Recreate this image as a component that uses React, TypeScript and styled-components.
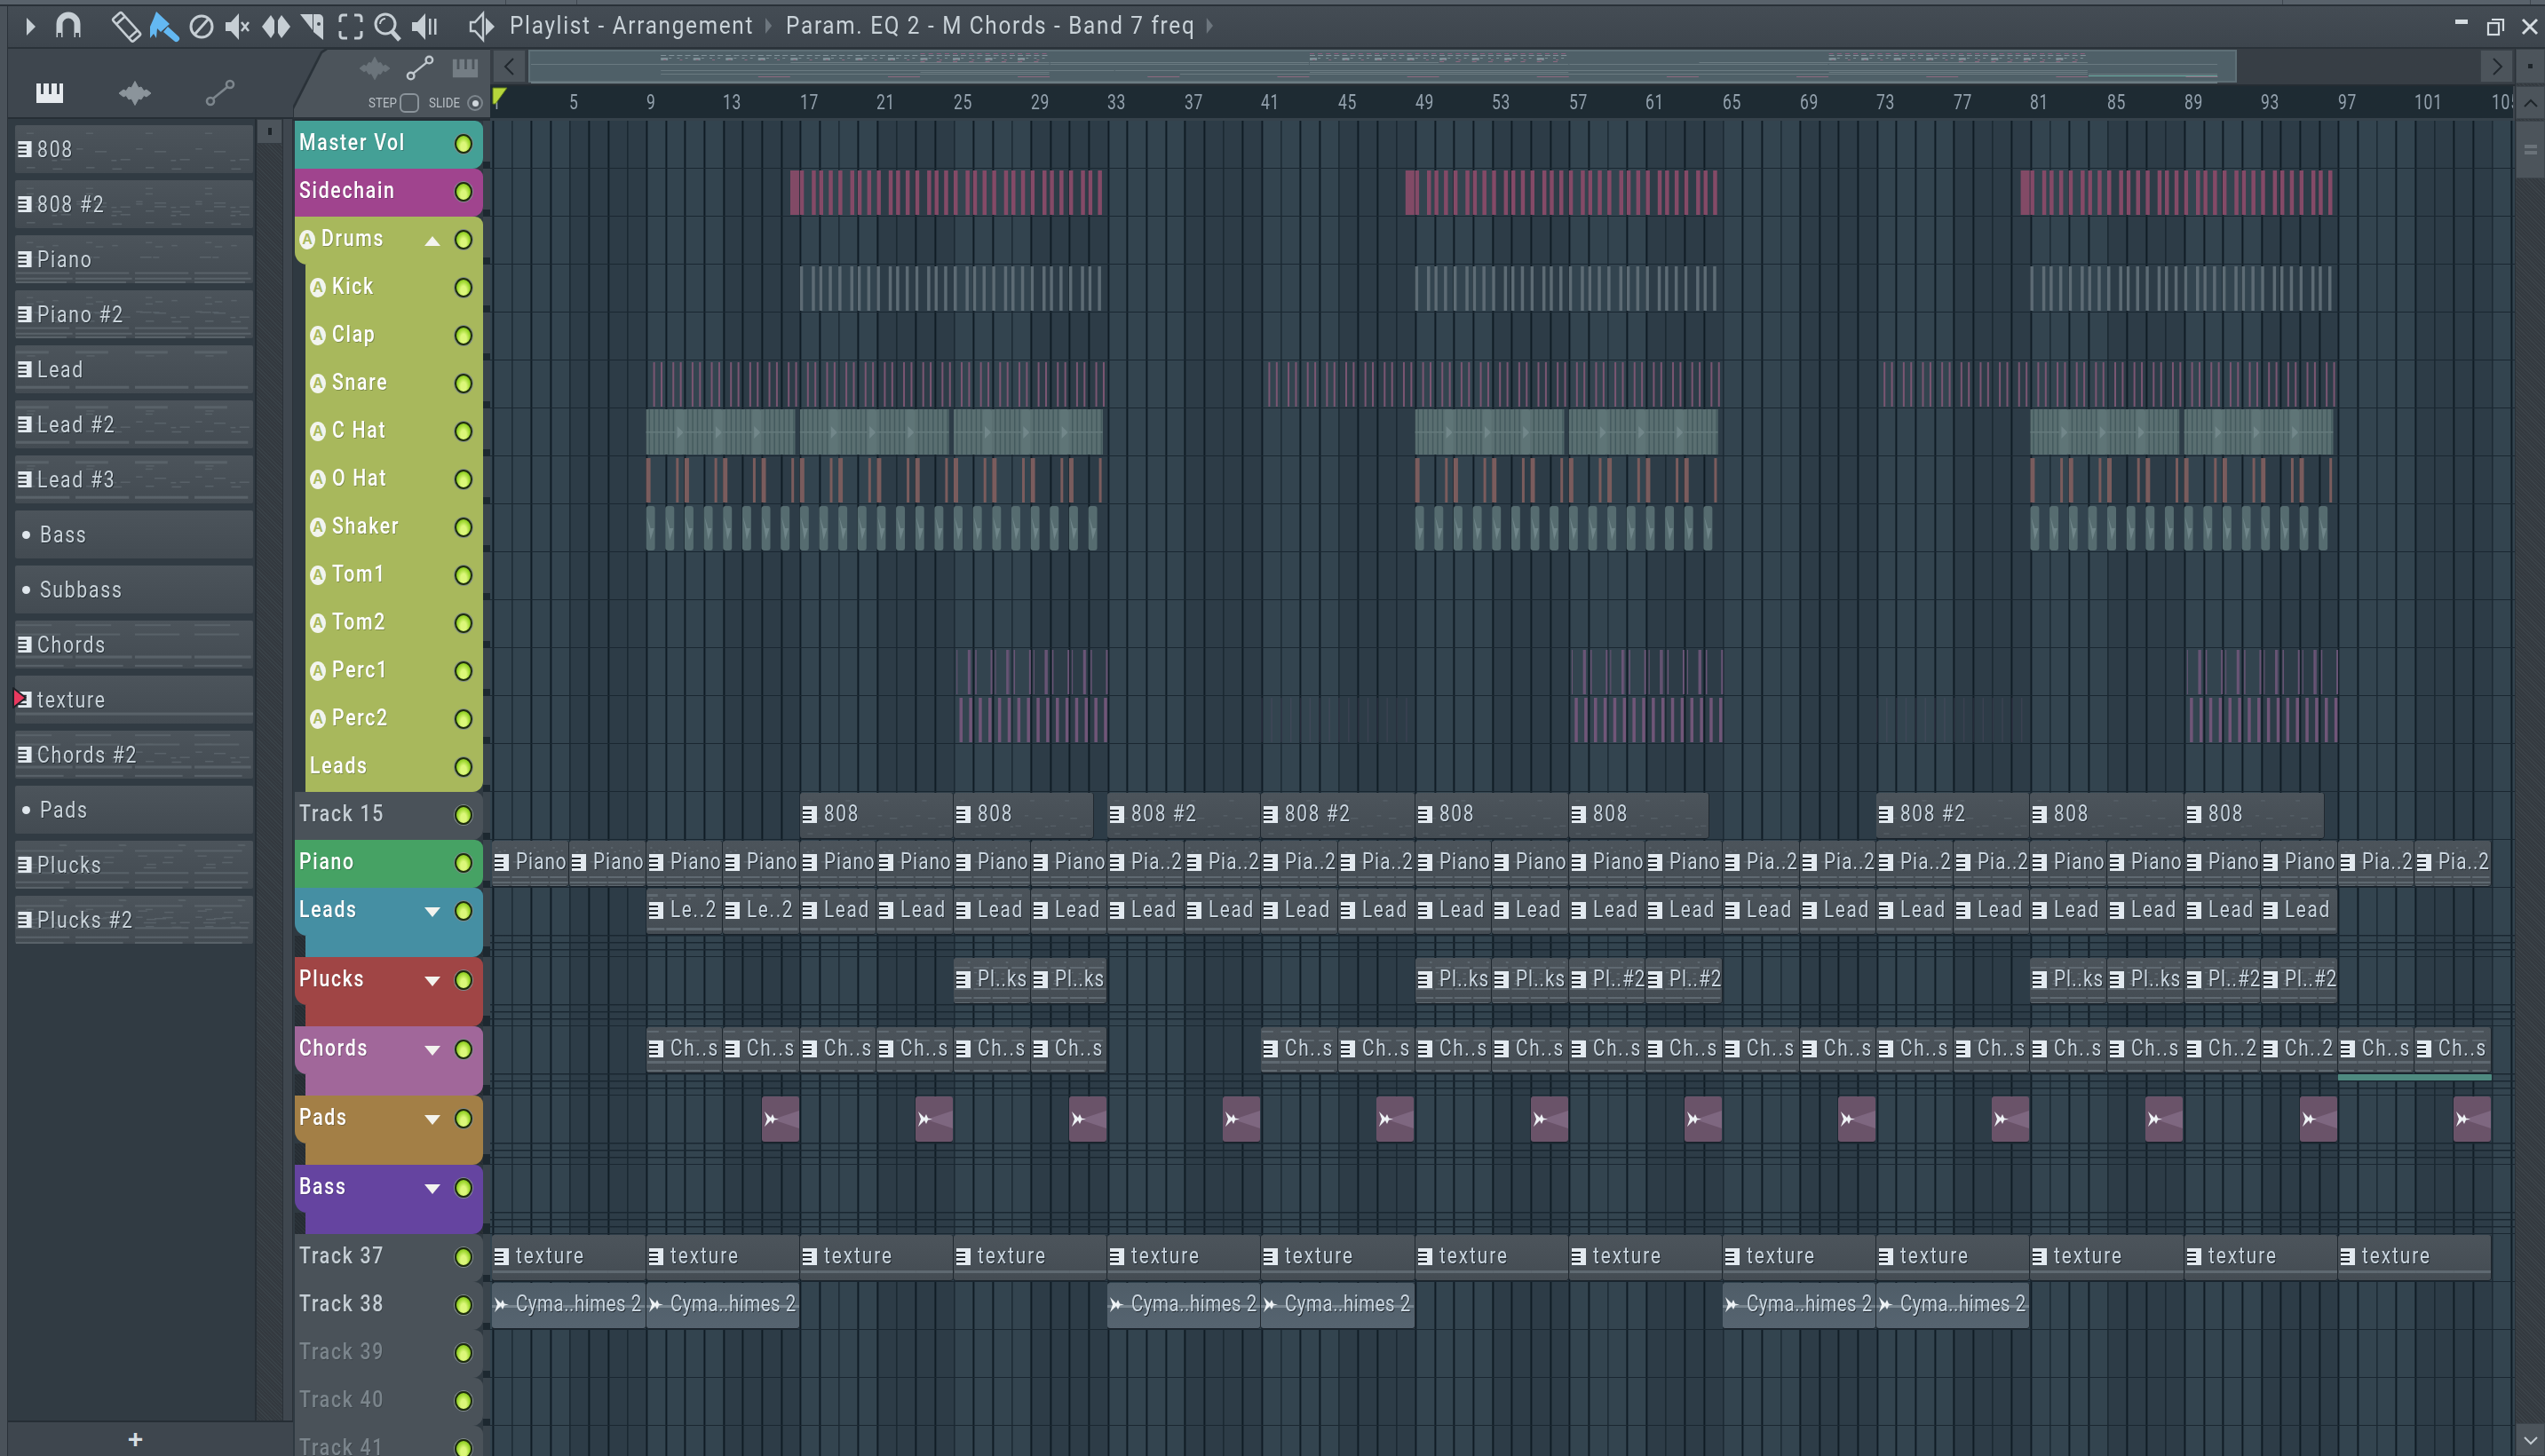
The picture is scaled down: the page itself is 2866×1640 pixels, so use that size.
import React from "react";
import styled, { createGlobalStyle } from "styled-components";

const FONT = `Roboto, "Liberation Sans", sans-serif`;
const BAR = 21.65;
const X0 = 2.4;
const bx = (b: number) => X0 + b * BAR;

const Global = createGlobalStyle`
  html, body { margin: 0; padding: 0; background: #4a525a; overflow: hidden; }
  * { box-sizing: border-box; }
`;

/* ---------- shell ---------- */
const Root = styled.div`
  width: 2866px; height: 1640px; display: flex; flex-direction: column; overflow: hidden;
  font-family: ${FONT}; background: #4a525a; color: #c9d3da;
`;
const TopStrip = styled.div`
  height: 7px; flex: none; background: #59626b; border-bottom: 2px solid #2a3138;
  display: flex;
`;
const StripCell = styled.div<{ $w: number }>`
  width: ${p => p.$w}px; height: 5px; border-right: 1px solid #3f474f;
`;
const Window = styled.div`
  flex: 1; min-height: 0; margin-left: 8px; border-left: 1px solid #2a3138;
  display: flex; flex-direction: column; background: #3e464e;
`;
const TitleBar = styled.div`
  height: 48px; flex: none; display: flex; align-items: center; padding-left: 9px;
  background: linear-gradient(#444c54, #3d454d);
  border-bottom: 2px solid #2a3239;
`;
const ToolIcon = styled.svg<{ $ml?: number }>`
  width: 36px; height: 36px; flex: none; margin-left: ${p => p.$ml ?? 6}px;
`;
const Title = styled.div`
  margin-left: 12px; font-size: 27px; letter-spacing: 1.9px; color: #c9d2d8; white-space: nowrap;
  display: flex; align-items: center; position: relative; top: -1px;
  transform: scaleX(0.9); transform-origin: 0 50%; width: 640px;
`;
const Crumb = styled.span`
  width: 0; height: 0; margin: 0 18px 0 14px; border-left: 8px solid #6d767e; border-top: 9px solid transparent; border-bottom: 9px solid transparent;
`;
const WinControls = styled.div`
  margin-left: auto; display: flex; gap: 16px; padding-right: 6px; align-items: center;
`;
const WinIcon = styled.svg`
  width: 22px; height: 22px;
`;
const Main = styled.div`
  flex: 1; min-height: 0; display: flex;
`;

/* ---------- left browser ---------- */
const LeftPanel = styled.div`
  width: 321px; flex: none; display: flex; flex-direction: column;
`;
const TabRow = styled.div`
  height: 79px; flex: none; display: flex; align-items: center; padding: 22px 0 0 28px; gap: 58px;
  border-bottom: 2px solid #262e35;
`;
const TabIcon = styled.svg`
  width: 38px; height: 34px; flex: none;
`;
const ListArea = styled.div`
  flex: 1; min-height: 0; display: flex; border-right: 1px solid #2a3138;
`;
const List = styled.div`
  width: 280px; flex: none; padding: 7px 2px 0 8px; display: flex; flex-direction: column; gap: 8px;
  background: #313b43; border-right: 2px solid #262e35;
`;
const ListItem = styled.div`
  height: 54px; flex: none; position: relative; border-radius: 2px; display: flex; align-items: center;
  background: linear-gradient(#4c545b, #434b52);
`;
const ListName = styled.span`
  display: inline-block; position: relative; top: 0; margin-left: 6px; font-size: 25px; letter-spacing: 2px; color: #c9d3da; white-space: nowrap;
  transform: scaleX(0.85); transform-origin: 0 50%; text-shadow: 1px 1px 0 #262e34;
`;
const ListDot = styled.span`
  position: relative; width: 9px; height: 9px; border-radius: 50%; background: #dfe6ec; margin: 0 5px 0 8px;
`;
const Selector = styled.svg`
  position: absolute; left: -4px; top: 13px; width: 18px; height: 24px;
`;
const ListScroll = styled.div`
  width: 29px; flex: none; display: flex; flex-direction: column;
  background: repeating-linear-gradient(45deg, #3a4248 0 1px, #33393f 1px 3px);
`;
const ListScrollBtn = styled.div`
  height: 28px; flex: none; background: #4c545b; border: 1px solid #343c43; display: flex; align-items: center; justify-content: center;
`;
const Pip = styled.span`
  width: 4px; height: 8px; background: #1d2429;
`;
const ListGutter = styled.div`
  width: 11px; flex: none; background: #3f474f; border-left: 1px solid #2a3138;
`;
const ListFooter = styled.div`
  height: 40px; flex: none; border-top: 2px solid #262e35; display: flex; align-items: center; justify-content: center;
  padding-right: 34px; font-size: 30px; font-weight: 700; color: #d6dde2; font-family: "Liberation Sans", sans-serif;
`;

/* ---------- track column ---------- */
const TrackColumn = styled.div`
  width: 222px; flex: none; display: flex; flex-direction: column; overflow: hidden; background: #3e464e;
`;
const HeaderWrap = styled.div`
  height: 81px; flex: none; padding: 1px 0 2px 1px; filter: drop-shadow(0 -2px 0 #2a3239) drop-shadow(-2px 0 0 #2a3239);
  border-bottom: 2px solid #262e35;
`;
const Header = styled.div`
  height: 100%; display: flex; flex-direction: column; align-items: flex-end; gap: 12px; padding: 5px 8px 0 0;
  background: #4c545b; clip-path: polygon(0 100%, 0 88%, 32px 4px, 38px 0, 100% 0, 100% 100%);
`;
const HeaderIcons = styled.div`
  display: flex; gap: 13px; align-items: center; padding-right: 1px;
`;
const HeaderIcon = styled.svg`
  width: 38px; height: 32px;
`;
const StepRow = styled.div`
  display: flex; align-items: center; font-size: 14.5px; color: #b8bfc5;
`;
const StepLabel = styled.span<{ $w: number }>`
  display: inline-block; width: ${p => p.$w}px; white-space: nowrap;
  transform: scaleX(0.92); transform-origin: 0 50%;
`;
const StepBox = styled.span`
  width: 22px; height: 22px; border: 2px solid #8b949b; border-radius: 6px; margin: 0 11px 0 4px;
`;
const Radio = styled.span`
  width: 18px; height: 18px; border: 2px solid #7c858c; border-radius: 50%; margin-left: 6px; display: flex; align-items: center; justify-content: center;
  &::after { content: ""; width: 7px; height: 7px; border-radius: 50%; background: #cfd6db; }
`;
const TrackList = styled.div`
  flex: 1; min-height: 0; display: flex; flex-direction: column; padding-left: 2px; background: #2f3941;
`;
const TrackRow = styled.div<{ $h: number }>`
  height: ${p => p.$h}px; flex: none; display: flex;
`;
const TrackBody = styled.div`
  width: 212px; flex: none; display: flex; flex-direction: column;
`;
const Notch = styled.div`
  width: 8px; flex: none; background: linear-gradient(#3a444c 0 85%, #1d2830 85%);
`;
const Head = styled.div<{ $c: string; $child?: boolean; $tr?: boolean; $br?: boolean; $bl?: boolean }>`
  height: 54px; flex: none; display: flex; align-items: center; padding: 0 12px 0 5px;
  margin-left: ${p => (p.$child ? 12 : 0)}px;
  background: ${p => p.$c};
  border-radius: 0 ${p => (p.$tr ? 9 : 0)}px ${p => (p.$br ? 12 : 0)}px ${p => (p.$bl ? 14 : 0)}px;
`;
const Tail = styled.div`
  flex: 1; display: flex;
  background: repeating-linear-gradient(45deg, #2c343a 0 1px, #262d33 1px 3px);
`;
const TailFill = styled.div<{ $c: string }>`
  flex: 1; margin-left: 12px; background: ${p => p.$c}; border-radius: 0 0 12px 0;
`;
const Badge = styled.span<{ $c: string }>`
  width: 18px; height: 22px; flex: none; border-radius: 50%; background: #f2f4ee; color: ${p => p.$c}; margin-right: 7px;
  font-size: 16px; font-weight: 700; line-height: 22px; text-align: center; position: relative; top: -1px;
  font-family: "Liberation Sans", sans-serif;
`;
const TrackName = styled.span<{ $tone: string }>`
  display: inline-block; font-size: 25px; font-weight: 500; letter-spacing: 2px; white-space: nowrap; color: ${p => p.$tone};
  position: relative; top: -3px; text-shadow: 1px 1px 0 rgba(20, 30, 30, 0.28);
  transform: scaleX(0.85); transform-origin: 0 50%; width: 120px;
`;
const Arrow = styled.span<{ $up?: boolean }>`
  width: 0; height: 0; margin-left: auto; position: relative; top: 0;
  border-left: 9px solid transparent; border-right: 9px solid transparent;
  ${p => (p.$up ? "border-bottom: 11px solid #f3f3ee;" : "border-top: 11px solid #f3f3ee;")}
`;
const Led = styled.span<{ $auto?: boolean }>`
  width: 20px; height: 22px; flex: none; border-radius: 50%; margin-left: ${p => (p.$auto ? "auto" : "16px")}; position: relative; top: -1px;
  background: radial-gradient(ellipse at 50% 68%, #dcf77a 0 28%, #9bd62c 62%, #66a516 100%);
  border: 2px solid #1d2c0e; box-shadow: 0 0 0 1px #808a8e;
`;

/* ---------- timeline ---------- */
const Timeline = styled.div`
  width: 2280px; flex: none; display: flex; flex-direction: column; min-height: 0; overflow: hidden;
`;
const OverviewRow = styled.div`
  height: 42px; flex: none; display: flex; gap: 1px; padding: 1px 2px 2px 3px; background: #373e45;
  border-bottom: 2px solid #252d33;
`;
const NavBtn = styled.div`
  width: 37px; flex: none; background: #4c545b; border: 1px solid #3a4249; display: flex; align-items: center; justify-content: center;
`;
const NavIcon = styled.svg`
  width: 20px; height: 24px;
`;
const Overview = styled.div`
  width: 1924px; flex: none; margin-left: 2px; position: relative; background: #4f6068; border: 2px solid #5e6f76;
`;
const OverviewSvg = styled.svg`
  position: absolute; left: 0; top: 0;
`;
const Ruler = styled.div`
  height: 39px; flex: none; position: relative; margin-right: 2px; background: #1e2b33; border-bottom: 3px solid #36424b; overflow: hidden;
`;
const RulerNum = styled.span`
  position: absolute; top: 5px; font-size: 23px; letter-spacing: 1px; color: #93a1ad;
  transform: scaleX(0.76); transform-origin: 0 50%;
`;
const Marker = styled.svg`
  position: absolute; left: 2px; top: 1px; width: 18px; height: 20px;
`;
const Grid = styled.div`
  flex: 1; min-height: 0; overflow: hidden; display: flex; flex-direction: column; position: relative;
  background-image:
    repeating-linear-gradient(90deg, #101c25 0 1.8px, transparent 1.8px 21.65px),
    repeating-linear-gradient(90deg, #33444f 0 86.6px, #2d3c47 86.6px 173.2px);
  background-position: 2.4px 0;
`;
const GridRow = styled.div<{ $h: number; $lanes?: boolean }>`
  height: ${p => p.$h}px; flex: none; position: relative; border-bottom: 1.5px solid #1a2731;
  ${p => p.$lanes ? `background:
    linear-gradient(#1a2731, #1a2731) 0 53px / 100% 1.5px no-repeat,
    linear-gradient(#1a2731, #1a2731) 0 61px / 100% 1.5px no-repeat,
    linear-gradient(#1a2731, #1a2731) 0 69px / 100% 1.5px no-repeat;` : ""}
`;
const RowArt = styled.svg`
  position: absolute; left: 0; top: 0; width: 100%; height: 100%; overflow: visible;
`;
const ClipBox = styled.div<{ $tone: "grey" | "sample" }>`
  position: absolute; top: 1px; height: 51px; border-radius: 3px; overflow: hidden;
  display: flex; align-items: center; padding-left: 3px;
  background: ${p => p.$tone === "sample" ? "linear-gradient(#4f5d68, #566470)" : "linear-gradient(#4c545b, #444c53)"};
  box-shadow: 0 1px 0 #1a222a, 1px 0 0 #20282f;
`;
const ClipArt = styled.svg`
  position: absolute; left: 0; top: 0;
`;
const ClipName = styled.span<{ $ls: number; $sx: number }>`
  display: inline-block; position: relative; top: -2px; margin-left: 8px; font-size: 25px; white-space: nowrap; color: #c9d5df;
  letter-spacing: ${p => p.$ls}px;
  transform: scaleX(${p => p.$sx}); transform-origin: 0 50%;
  text-shadow: 1px 1px 0 #20272d;
`;
const PadClip = styled.div`
  position: absolute; top: 1px; height: 51px; width: 42px; border-radius: 3px; overflow: hidden;
  background: #6a5369; box-shadow: 0 1px 0 #1a222a;
`;
const Glyph = styled.svg`
  position: relative; width: 16px; height: 19px; flex: none; top: -1px;
`;
const PadSvg = styled.svg`
  position: absolute; left: 0; top: 0; width: 100%; height: 100%;
`;
const ListGlyph = styled.svg`
  position: relative; width: 16px; height: 18px; flex: none; margin-left: 3px;
`;
const ListArt = styled.svg`
  position: absolute; left: 0; top: 0; width: 100%; height: 100%;
`;

/* ---------- right scrollbar ---------- */
const RightBar = styled.div`
  width: 34px; flex: none; display: flex; flex-direction: column; background: repeating-linear-gradient(45deg, #3c4349 0 1px, #343a40 1px 3px);
  border-left: 1px solid #2a3138;
`;
const RBtn = styled.div<{ $h: number; $mb?: number }>`
  height: ${p => p.$h}px; flex: none; margin-bottom: ${p => p.$mb ?? 0}px; background: #4c545b; border: 1px solid #3d454c;
  display: flex; align-items: center; justify-content: center; flex-direction: column; gap: 3px;
`;
const RSpace = styled.div`
  flex: 1;
`;
const RDot = styled.span`
  width: 5px; height: 5px; background: #1e252a;
`;
const RLine = styled.span`
  width: 14px; height: 4px; background: #6a7279;
`;

/* ---------- data ---------- */
type Kind = "808" | "piano" | "lead" | "chord" | "texture" | "pluck" | "none";
const rngFor = (seed: number) => {
  let s = seed;
  return () => { s = (s * 1664525 + 1013904223) % 4294967296; return s / 4294967296; };
};
const ART: Record<Kind, { lines: [number, number, number][]; scatter: [number, number, number] }> = {
  "808": { lines: [], scatter: [8, 48, 7] },
  piano: { lines: [[40, 2, .9], [46, 2, .95], [50, 2, .85]], scatter: [3, 26, 5] },
  lead: { lines: [[6, 3, .55], [44, 3, .9]], scatter: [8, 18, 1] },
  chord: { lines: [[4, 2, .6], [14, 2, .75], [38, 3, .95], [48, 2, .8]], scatter: [0, 0, 0] },
  texture: { lines: [[40, 3, 1]], scatter: [0, 0, 0] },
  pluck: { lines: [[10, 2, .8], [34, 2, .9], [44, 2, .9], [50, 2, .8]], scatter: [3, 30, 7] },
  none: { lines: [], scatter: [0, 0, 0] },
};
const seedOf: Record<Kind, number> = { "808": 8, piano: 21, lead: 33, chord: 47, texture: 5, pluck: 61, none: 1 };

const artRects = (kind: Kind, w: number, cell: number) => {
  const def = ART[kind];
  const rnd = rngFor(seedOf[kind]);
  const out: [number, number, number, number][] = [];
  const n = Math.max(1, Math.round(w / cell));
  const cw = w / n;
  const scatter = Array.from({ length: def.scatter[2] }, () => [
    rnd() * 0.8, def.scatter[0] + rnd() * (def.scatter[1] - def.scatter[0]), 0.08 + rnd() * 0.14,
  ]);
  for (let c = 0; c < n; c++) {
    def.lines.forEach(([y, h, f]) => out.push([c * cw + 1, y, cw * f, h]));
    scatter.forEach(([x, y, l]) => out.push([c * cw + x * cw, y, l * cw, 1.5]));
  }
  return out;
};

const Art: React.FC<{ kind: Kind; w: number; cell: number; op?: number }> = ({ kind, w, cell, op = 1 }) => (
  <ClipArt width={w} height={52} viewBox={`0 0 ${w} 52`} style={{ opacity: op }}>
    {artRects(kind, w, cell).map((r, i) => <rect key={i} x={r[0]} y={r[1]} width={r[2]} height={r[3]} fill="#5f6971" />)}
  </ClipArt>
);

const kindOf = (name: string): Kind => {
  if (name.startsWith("808")) return "808";
  if (name.startsWith("Pi")) return "piano";
  if (name.startsWith("Le")) return "lead";
  if (name.startsWith("Ch")) return "chord";
  if (name.startsWith("tex")) return "texture";
  if (name.startsWith("Pl")) return "pluck";
  return "none";
};

const fitOf = (name: string): { ls: number; sx: number } => {
  if (name.startsWith("Cyma")) return { ls: 0.6, sx: 0.82 };
  if (name.startsWith("Pi") || name.startsWith("Pl")) return { ls: 1.2, sx: 0.83 };
  if (name === "texture") return { ls: 2.4, sx: 0.83 };
  return { ls: 2, sx: 0.83 };
};

type ClipData = { b: number; len: number; name: string };
const seq = (from: number, count: number, step: number, name: string, len = step): ClipData[] =>
  Array.from({ length: count }, (_, i) => ({ b: from + i * step, len, name }));

type RowSpec = {
  name: string; color: string; tone: string; group?: "open" | "closed";
  child?: boolean; last?: boolean; badge?: boolean; h: number; clips?: ClipData[]; pads?: boolean; sample?: boolean; art?: string;
};
const G = "#a8b85c";
const WHITE = "#ffffff";
const GREY = "#4a5259";
const rows: RowSpec[] = [
  { name: "Master Vol", color: "#44a096", tone: WHITE, h: 54 },
  { name: "Sidechain", color: "#a0448e", tone: WHITE, h: 54, art: "side" },
  { name: "Drums", color: G, tone: WHITE, group: "open", badge: true, h: 54 },
  { name: "Kick", color: G, tone: WHITE, child: true, badge: true, h: 54, art: "kick" },
  { name: "Clap", color: G, tone: WHITE, child: true, badge: true, h: 54 },
  { name: "Snare", color: G, tone: WHITE, child: true, badge: true, h: 54, art: "snare" },
  { name: "C Hat", color: G, tone: WHITE, child: true, badge: true, h: 54, art: "chat" },
  { name: "O Hat", color: G, tone: WHITE, child: true, badge: true, h: 54, art: "ohat" },
  { name: "Shaker", color: G, tone: WHITE, child: true, badge: true, h: 54, art: "shaker" },
  { name: "Tom1", color: G, tone: WHITE, child: true, badge: true, h: 54 },
  { name: "Tom2", color: G, tone: WHITE, child: true, badge: true, h: 54 },
  { name: "Perc1", color: G, tone: WHITE, child: true, badge: true, h: 54, art: "perc1" },
  { name: "Perc2", color: G, tone: WHITE, child: true, badge: true, h: 54, art: "perc2" },
  { name: "Leads", color: G, tone: WHITE, child: true, last: true, h: 54 },
  {
    name: "Track 15", color: GREY, tone: "#c5ced5", h: 54, clips: [
      { b: 16, len: 8, name: "808" }, { b: 24, len: 7.3, name: "808" }, { b: 32, len: 8, name: "808 #2" }, { b: 40, len: 8, name: "808 #2" },
      { b: 48, len: 8, name: "808" }, { b: 56, len: 7.3, name: "808" }, { b: 72, len: 8, name: "808 #2" }, { b: 80, len: 8, name: "808" }, { b: 88, len: 7.3, name: "808" },
    ],
  },
  {
    name: "Piano", color: "#46a264", tone: WHITE, h: 54, clips: [
      ...seq(0, 8, 4, "Piano"), ...seq(32, 4, 4, "Pia..2"), ...seq(48, 4, 4, "Piano"), ...seq(64, 4, 4, "Pia..2"), ...seq(80, 4, 4, "Piano"), ...seq(96, 2, 4, "Pia..2"),
    ],
  },
  {
    name: "Leads", color: "#458fa3", tone: WHITE, group: "closed", h: 78, clips: [...seq(8, 2, 4, "Le..2"), ...seq(16, 20, 4, "Lead")],
  },
  {
    name: "Plucks", color: "#a04545", tone: WHITE, group: "closed", h: 78, clips: [
      ...seq(24, 2, 4, "Pl..ks"), ...seq(48, 2, 4, "Pl..ks"), ...seq(56, 2, 4, "Pl..#2"), ...seq(80, 2, 4, "Pl..ks"), ...seq(88, 2, 4, "Pl..#2"),
    ],
  },
  {
    name: "Chords", color: "#a1679a", tone: WHITE, group: "closed", h: 78, art: "teal", clips: [
      ...seq(8, 6, 4, "Ch..s"), ...seq(40, 12, 4, "Ch..s"), ...seq(88, 2, 4, "Ch..2"), ...seq(96, 2, 4, "Ch..s"),
    ],
  },
  { name: "Pads", color: "#a37f46", tone: WHITE, group: "closed", h: 78, pads: true },
  { name: "Bass", color: "#6544a0", tone: WHITE, group: "closed", h: 78 },
  { name: "Track 37", color: GREY, tone: "#c5ced5", h: 54, clips: seq(0, 13, 8, "texture") },
  {
    name: "Track 38", color: GREY, tone: "#c5ced5", h: 54, sample: true, clips: [
      ...seq(0, 2, 8, "Cyma..himes 2"), ...seq(32, 2, 8, "Cyma..himes 2"), ...seq(64, 2, 8, "Cyma..himes 2"),
    ],
  },
  { name: "Track 39", color: GREY, tone: "#7b858c", h: 54 },
  { name: "Track 40", color: GREY, tone: "#7b858c", h: 54 },
  { name: "Track 41", color: GREY, tone: "#7b858c", h: 54 },
];

const PERIOD = BAR * 2;
type R = [number, number];
const pulses = (ranges: R[], offsets: number[], period: number, w: number | number[], fill: string, key: string, rx = 0, op = 1) =>
  ranges.flatMap(([a, b], ri) => {
    const out: React.ReactNode[] = [];
    const start = bx(a), end = bx(b);
    for (let c = start, pi = 0; c < end - 1; c += period, pi++) {
      offsets.forEach((o, i) => {
        const x = c + o;
        if (x >= end - 1) return;
        const ww = Array.isArray(w) ? w[i] : w;
        out.push(<rect key={`${key}${ri}-${pi}-${i}`} x={x} y={2} width={ww} height={50} rx={rx} fill={fill} opacity={op} />);
      });
    }
    return out;
  });

const chatBlocks = (ranges: R[]) => ranges.flatMap(([a, b], ri) => {
  const out: React.ReactNode[] = [];
  const s = bx(a), e = bx(b);
  out.push(<rect key={`c${ri}`} x={s} y={1} width={e - s} height={51} fill="#5a6f71" />);
  let n = 0;
  for (let x = s + 3; x < e; x += 5.42, n++) {
    out.push(<rect key={`s${ri}-${n}`} x={x} y={1} width={1.4} height={51} fill="#445a5e" />);
  }
  out.push(<rect key={`m${ri}`} x={s} y={26} width={e - s} height={1.5} fill="#647a7c" />);
  for (let x = s + 33; x < e - 5; x += PERIOD) {
    out.push(<rect key={`b${ri}-${x}`} x={x} y={1} width={10} height={51} rx={3} fill="#5f7577" />);
    out.push(<path key={`t${ri}-${x}`} d={`M${x + 2} 20 l7 7 l-7 7z`} fill="#72878a" />);
  }
  return out;
});

const shaker = (ranges: R[]) => ranges.flatMap(([a, b], ri) => {
  const out: React.ReactNode[] = [];
  const s = bx(a), e = bx(b);
  let n = 0;
  for (let x = s; x < e - 2; x += BAR, n++) {
    out.push(<rect key={`r${ri}-${n}`} x={x} y={2} width={10} height={50} rx={3} fill="#566c70" />);
    out.push(<path key={`p${ri}-${n}`} d={`M${x + 1} 14 L${x + 5} 27 L${x + 9} 27 L${x + 5} 40z`} fill="#6f8589" />);
  }
  return out;
});

const ARTS: Record<string, () => React.ReactNode> = {
  side: () => <>
    {[15.5, 47.5, 79.5].map(b => <rect key={b} x={bx(b)} y={2} width={10} height={50} fill="#824a66" />)}
    {pulses([[16, 32], [48, 64], [80, 96]], [0, 13.4, 21.7, 32.5], PERIOD, 4.5, "#844a67", "s")}
  </>,
  kick: () => pulses([[16, 32], [48, 64], [80, 96]], [0, 13.4, 21.7, 32.5], PERIOD, 3.5, "#5d6b74", "k"),
  snare: () => pulses([[8, 32], [40, 64], [72, 96]], [8, 16.4], BAR, 2, "#7a5672", "n"),
  chat: () => chatBlocks([[8, 15.75], [16, 23.75], [24, 31.75], [48, 55.75], [56, 63.75], [80, 87.75], [88, 95.75]]),
  ohat: () => pulses([[8, 32], [48, 64], [80, 96]], [0, 33.7], PERIOD, [5, 3], "#7a5c5d", "o"),
  shaker: () => shaker([[8, 31.7], [48, 63.7], [80, 95.7]]),
  perc1: () => pulses([[24.15, 32], [56.15, 64], [88.15, 96]], [0, 12.6, 15, 21, 38.3], PERIOD, [1, 2.5, 1, 1.5, 2], "#695576", "a"),
  perc2: () => <>
    {pulses([[24.3, 32], [56.3, 64], [88.3, 96]], [0], 10.85, 3.5, "#705678", "b")}
    {pulses([[40, 48], [72, 80]], [0], 10.85, 1.5, "#75587f", "f", 0, 0.2)}
  </>,
  teal: () => <rect x={bx(96)} y={54} width={BAR * 8} height={7} rx={1} fill="#4f8a80" />,
};

const LIST: { name: string; kind: Kind | "dot"; sel?: boolean }[] = [
  { name: "808", kind: "808" }, { name: "808 #2", kind: "808" }, { name: "Piano", kind: "piano" }, { name: "Piano #2", kind: "piano" },
  { name: "Lead", kind: "lead" }, { name: "Lead #2", kind: "lead" }, { name: "Lead #3", kind: "lead" },
  { name: "Bass", kind: "dot" }, { name: "Subbass", kind: "dot" }, { name: "Chords", kind: "chord" },
  { name: "texture", kind: "texture", sel: true }, { name: "Chords #2", kind: "chord" }, { name: "Pads", kind: "dot" },
  { name: "Plucks", kind: "pluck" }, { name: "Plucks #2", kind: "pluck" },
];

/* ---------- glyphs ---------- */
const ICON = "#c6ced4";
const PianoGlyph: React.FC = () => (
  <>
    <rect x="0" y="0" width="16" height="19" fill="#e3eaf0" />
    <rect x="0" y="4" width="10" height="2" fill="#20262c" />
    <rect x="0" y="9" width="10" height="2" fill="#20262c" />
    <rect x="0" y="14" width="10" height="2" fill="#20262c" />
  </>
);
const SampleGlyph: React.FC = () => (
  <path d="M0 1 L7 8 L9 4 L11 8.5 L16 9.5 L11 10.5 L9 15 L7 11 L0 18 L3 9.5z" fill="#eef2f5" />
);
const Keys: React.FC<{ c: string }> = ({ c }) => (
  <path fill={c} d="M4 6h5v12h3V6h6v12h3V6h6v12h3V6h4v22H4z" />
);
const Wave: React.FC<{ c: string }> = ({ c }) => (
  <path fill={c} stroke={c} strokeWidth="1" strokeLinejoin="round" d="M1 17 L6 13 L9 14.5 L12 10 L15 11 L19 3.5 L23 11 L26 10 L29 14.5 L32 13 L37 17 L32 21 L29 19.5 L26 24 L23 23 L19 30.5 L15 23 L12 24 L9 19.5 L6 21z" />
);
const Nodes: React.FC<{ c: string }> = ({ c }) => (
  <g fill="none" stroke={c} strokeWidth="2.6">
    <circle cx="8" cy="26" r="4" /><circle cx="30" cy="7" r="4" /><path d="M11 23 L27 10" />
  </g>
);

const toolset: { ml?: number; el: React.ReactNode }[] = [
  { ml: 0, el: <path d="M12 8 L22 18 L12 28z" fill={ICON} /> },
  { ml: 5, el: <g><path d="M8 30 V15 a10 10 0 0 1 20 0 V30" fill="none" stroke={ICON} strokeWidth="7" /><rect x="6" y="25" width="4" height="6" fill="#3f474f" /><rect x="26" y="25" width="4" height="6" fill="#3f474f" /></g> },
  { ml: 30, el: <g transform="rotate(-42 18 18)" fill="none" stroke={ICON} strokeWidth="2.6"><rect x="11" y="1" width="13" height="34" rx="2" /><path d="M11 8h13M11 29h13" /></g> },
  { ml: 6, el: <g fill="#63b8f2"><path d="M9 1 L24 15 L14 24 L10 20 L9 31 L6 26 L2 31 L2 18 L6 9z" /><path d="M22 18 L34 29 a3.5 3.5 0 0 1 -5 5 L17 24z" /></g> },
  { ml: 6, el: <g fill="none" stroke={ICON} strokeWidth="3"><circle cx="18" cy="18" r="12" /><path d="M10 27L26 9" /></g> },
  { ml: 6, el: <g fill={ICON}><path d="M3 13h6l9-10v30l-9-10H3z" /><path d="M21 13l8 10m0-10l-8 10" stroke={ICON} strokeWidth="2.6" fill="none" /></g> },
  { ml: 6, el: <g fill={ICON}><path d="M2 18 L12 5 L16 11 L16 25 L12 31z" /><path d="M34 18 L24 5 L20 11 L20 25 L24 31z" /></g> },
  { ml: 6, el: <g><path d="M3 4 L17 4 L17 22z" fill={ICON} /><path d="M18 4 h6 a5 5 0 0 1 5 5 v24 L18 24z" fill={ICON} /><circle cx="24" cy="15" r="2" fill="#3f474f" /></g> },
  { ml: 6, el: <path d="M6 13V8a3 3 0 0 1 3-3h5M22 5h5a3 3 0 0 1 3 3v5M30 23v5a3 3 0 0 1-3 3h-5M14 31H9a3 3 0 0 1-3-3v-5" fill="none" stroke={ICON} strokeWidth="3" /> },
  { ml: 6, el: <g fill="none" stroke={ICON}><circle cx="15" cy="15" r="11" strokeWidth="3" /><path d="M22 23l9 10" strokeWidth="5" /><path d="M9 15a6 6 0 0 1 6-6" strokeWidth="2" /></g> },
  { ml: 6, el: <g fill={ICON}><path d="M3 13h6l9-10v30l-9-10H3z" /><rect x="22" y="9" width="2.5" height="18" /><rect x="28" y="9" width="2.5" height="18" /></g> },
  { ml: 29, el: <g><path d="M4 13h5l9-10v30l-9-10H4z" fill="none" stroke={ICON} strokeWidth="2.4" /><path d="M21 8l10 10-10 10z" fill={ICON} /></g> },
];

const Overviewmap: React.FC = () => {
  const sx = (b: number) => 1 + b * 18.27;
  const dashes: React.ReactNode[] = [];
  [[8, 32], [48, 64], [80, 96]].forEach(([a, b], r) => {
    for (let i = a; i < b; i += 0.5) {
      const x = sx(i);
      const k = `${r}-${i}`;
      if (a !== 8 || i >= 24) dashes.push(<rect key={`p${k}`} x={x} y={2} width={5} height={1} fill="#8e5d7c" />);
      dashes.push(<rect key={`a${k}`} x={x} y={4} width={6} height={1} fill="#82929a" />);
      dashes.push(<rect key={`b${k}`} x={x} y={7} width={i % 2 === 0 ? 8 : 3} height={i % 2 === 0 ? 3 : 1} fill="#7d8f96" />);
      if (i % 1 === 0) dashes.push(<rect key={`c${k}`} x={x + 3} y={9} width={3} height={1} fill="#8e6a80" />);
    }
  });
  [[24, 32], [56, 64], [88, 96]].forEach(([a, b]) => {
    for (let i = a; i < b; i += 1) dashes.push(<rect key={`q${i}`} x={sx(i)} y={11} width={5} height={1} fill="#8e6a80" />);
  });
  const lane = (ranges: [number, number][], y: number, c: string, h = 1) =>
    ranges.map(([a, b], i) => <rect key={`${y}-${i}`} x={sx(a)} y={y} width={(b - a) * 18.27 - 1} height={h} fill={c} />);
  return (
    <OverviewSvg width="1920" height="38" viewBox="0 0 1920 38">
      {dashes}
      {lane([[0, 32], [32, 48], [48, 64], [64, 80], [80, 104]], 14, "#6a7a81")}
      {lane([[16, 32], [32, 48], [48, 56], [72, 96]], 12, "#6c7c83", 1)}
      {lane([[8, 36], [36, 96]], 21, "#6a7a81")}
      {lane([[24, 32], [48, 64], [80, 96]], 23, "#6a7a81")}
      {lane([[8, 32], [40, 96], [96, 104]], 25, "#6a7a81")}
      {lane([[96, 104]], 27, "#6fb0a6")}
      {Array.from({ length: 12 }, (_, i) => <rect key={`pd${i}`} x={sx(14 + i * 8)} y={28} width={36} height={1} fill="#8e6a80" />)}
      {lane([[0, 104]], 34, "#6c7c83", 2)}
    </OverviewSvg>
  );
};

/* ---------- page ---------- */
export default function App() {
  return (
    <Root>
      <Global />
      <TopStrip>
        <StripCell $w={570} /><StripCell $w={80} /><StripCell $w={1921} /><StripCell $w={279} />
      </TopStrip>
      <Window>
        <TitleBar>
          {toolset.map((t, i) => <ToolIcon key={i} $ml={t.ml} viewBox="0 0 36 36">{t.el}</ToolIcon>)}
          <Title>
            <span>Playlist - Arrangement</span><Crumb />
            <span>Param. EQ 2 - M Chords - Band 7 freq</span><Crumb />
          </Title>
          <WinControls>
            <WinIcon viewBox="0 0 22 22"><rect x="3" y="3" width="14" height="5" fill="#d5dce1" /></WinIcon>
            <WinIcon viewBox="0 0 22 22"><g fill="none" stroke="#d5dce1" strokeWidth="2.2"><rect x="2" y="7" width="12" height="13" /><path d="M6 3h13v13" /></g></WinIcon>
            <WinIcon viewBox="0 0 22 22"><path d="M3 3l16 16M19 3L3 19" stroke="#d5dce1" strokeWidth="3" /></WinIcon>
          </WinControls>
        </TitleBar>
        <Main>
          <LeftPanel>
            <TabRow>
              <TabIcon viewBox="0 0 38 34"><Keys c="#e6eaee" /></TabIcon>
              <TabIcon viewBox="0 0 38 34"><Wave c="#8b949b" /></TabIcon>
              <TabIcon viewBox="0 0 38 34"><Nodes c="#7d868d" /></TabIcon>
            </TabRow>
            <ListArea>
              <List>
                {LIST.map((it, i) => (
                  <ListItem key={i}>
                    {it.kind !== "dot" && (
                      <ListArt viewBox="0 0 268 52" preserveAspectRatio="none">
                        {artRects(it.kind, 268, 67).map((r, j) => <rect key={j} x={r[0]} y={r[1]} width={r[2]} height={r[3]} fill="#596269" />)}
                        {it.name.includes("#") && artRects("808", 268, 67).map((r, j) => <rect key={`x${j}`} x={r[0]} y={r[1] / 2 + 10} width={r[2]} height={r[3]} fill="#596269" />)}
                      </ListArt>
                    )}
                    {it.kind === "dot" ? <ListDot /> : <ListGlyph viewBox="0 0 16 19"><PianoGlyph /></ListGlyph>}
                    <ListName>{it.name}</ListName>
                    {it.sel && <Selector viewBox="0 0 18 24"><path d="M2 1 L16 12 L2 23z" fill="#e8395f" stroke="#1d2228" strokeWidth="2" strokeLinejoin="round" /></Selector>}
                  </ListItem>
                ))}
              </List>
              <ListScroll><ListScrollBtn><Pip /></ListScrollBtn></ListScroll>
              <ListGutter />
            </ListArea>
            <ListFooter>+</ListFooter>
          </LeftPanel>

          <TrackColumn>
            <HeaderWrap>
              <Header>
                <HeaderIcons>
                  <HeaderIcon viewBox="0 0 38 34"><Wave c="#6b747b" /></HeaderIcon>
                  <HeaderIcon viewBox="0 0 38 34"><Nodes c="#c0c8ce" /></HeaderIcon>
                  <HeaderIcon viewBox="0 0 38 34"><Keys c="#747d84" /></HeaderIcon>
                </HeaderIcons>
                <StepRow>
                  <StepLabel $w={31}>STEP</StepLabel><StepBox />
                  <StepLabel $w={37}>SLIDE</StepLabel><Radio />
                </StepRow>
              </Header>
            </HeaderWrap>
            <TrackList>
              {rows.map((r, i) => (
                <TrackRow key={i} $h={r.h}>
                  <TrackBody>
                    {r.group === "closed" ? (
                      <>
                        <Head $c={r.color} $tr $bl>
                          <TrackName $tone={r.tone}>{r.name}</TrackName>
                          <Arrow /><Led />
                        </Head>
                        <Tail><TailFill $c={r.color} /></Tail>
                      </>
                    ) : (
                      <Head $c={r.color} $child={r.child} $tr={!r.child} $br={!r.child && !r.group || r.last} $bl={r.group === "open"}>
                        {r.badge && <Badge $c={r.color}>A</Badge>}
                        <TrackName $tone={r.tone}>{r.name}</TrackName>
                        {r.group === "open" ? <><Arrow $up /><Led /></> : <Led $auto />}
                      </Head>
                    )}
                  </TrackBody>
                  <Notch />
                </TrackRow>
              ))}
            </TrackList>
          </TrackColumn>

          <Timeline>
            <OverviewRow>
              <NavBtn><NavIcon viewBox="0 0 20 24"><path d="M14 3L5 12l9 9" fill="none" stroke="#20272d" strokeWidth="2" /></NavIcon></NavBtn>
              <Overview><Overviewmap /></Overview>
              <RSpace />
              <NavBtn><NavIcon viewBox="0 0 20 24"><path d="M6 3l9 9-9 9" fill="none" stroke="#20272d" strokeWidth="2" /></NavIcon></NavBtn>
            </OverviewRow>
            <Ruler>
              {Array.from({ length: 27 }, (_, i) => i * 4 + 1).map(n => (
                <RulerNum key={n} style={{ left: bx(n - 1) }}>{n}</RulerNum>
              ))}
              <Marker viewBox="0 0 18 20"><path d="M1 1h16L4 19H1z" fill="#b6d63c" stroke="#5e7a1a" /></Marker>
            </Ruler>
            <Grid>
              {rows.map((r, i) => (
                <GridRow key={i} $h={r.h} $lanes={r.h === 78}>
                  {r.art && <RowArt>{ARTS[r.art]()}</RowArt>}
                  {r.clips?.map((c, j) => {
                    const w = c.len * BAR - 1;
                    const fit = fitOf(c.name);
                    return (
                      <ClipBox key={j} $tone={r.sample ? "sample" : "grey"} style={{ left: bx(c.b), width: w }}>
                        <Art kind={kindOf(c.name)} w={w} cell={c.len === 4 ? 21.6 : 43.3} op={kindOf(c.name) === "808" ? 0.6 : 1} />
                        {r.sample && <ClipArt width={w} height={52}><rect x="0" y="25" width={w} height="3" fill="#78858f" /></ClipArt>}
                        <Glyph viewBox="0 0 16 19">{r.sample ? <SampleGlyph /> : <PianoGlyph />}</Glyph>
                        <ClipName $ls={fit.ls} $sx={fit.sx}>{c.name}</ClipName>
                      </ClipBox>
                    );
                  })}
                  {r.pads && Array.from({ length: 12 }, (_, k) => (
                    <PadClip key={k} style={{ left: bx(14 + k * 8) }}>
                      <PadSvg viewBox="0 0 42 51">
                        <path d="M12 26 L42 16 L42 36z" fill="#7e6780" />
                        <g transform="translate(3 16)"><SampleGlyph /></g>
                      </PadSvg>
                    </PadClip>
                  ))}
                </GridRow>
              ))}
            </Grid>
          </Timeline>

          <RightBar>
            <RBtn $h={39} $mb={3}><RDot /></RBtn>
            <RBtn $h={37} $mb={2}><NavIcon viewBox="0 0 20 24"><path d="M3 16l7-7 7 7" fill="none" stroke="#1e252a" strokeWidth="2" /></NavIcon></RBtn>
            <RBtn $h={65}><RLine /><RLine /></RBtn>
            <RSpace />
            <RBtn $h={37}><NavIcon viewBox="0 0 20 24"><path d="M3 9l7 7 7-7" fill="none" stroke="#c4ccd2" strokeWidth="2" /></NavIcon></RBtn>
          </RightBar>
        </Main>
      </Window>
    </Root>
  );
}
